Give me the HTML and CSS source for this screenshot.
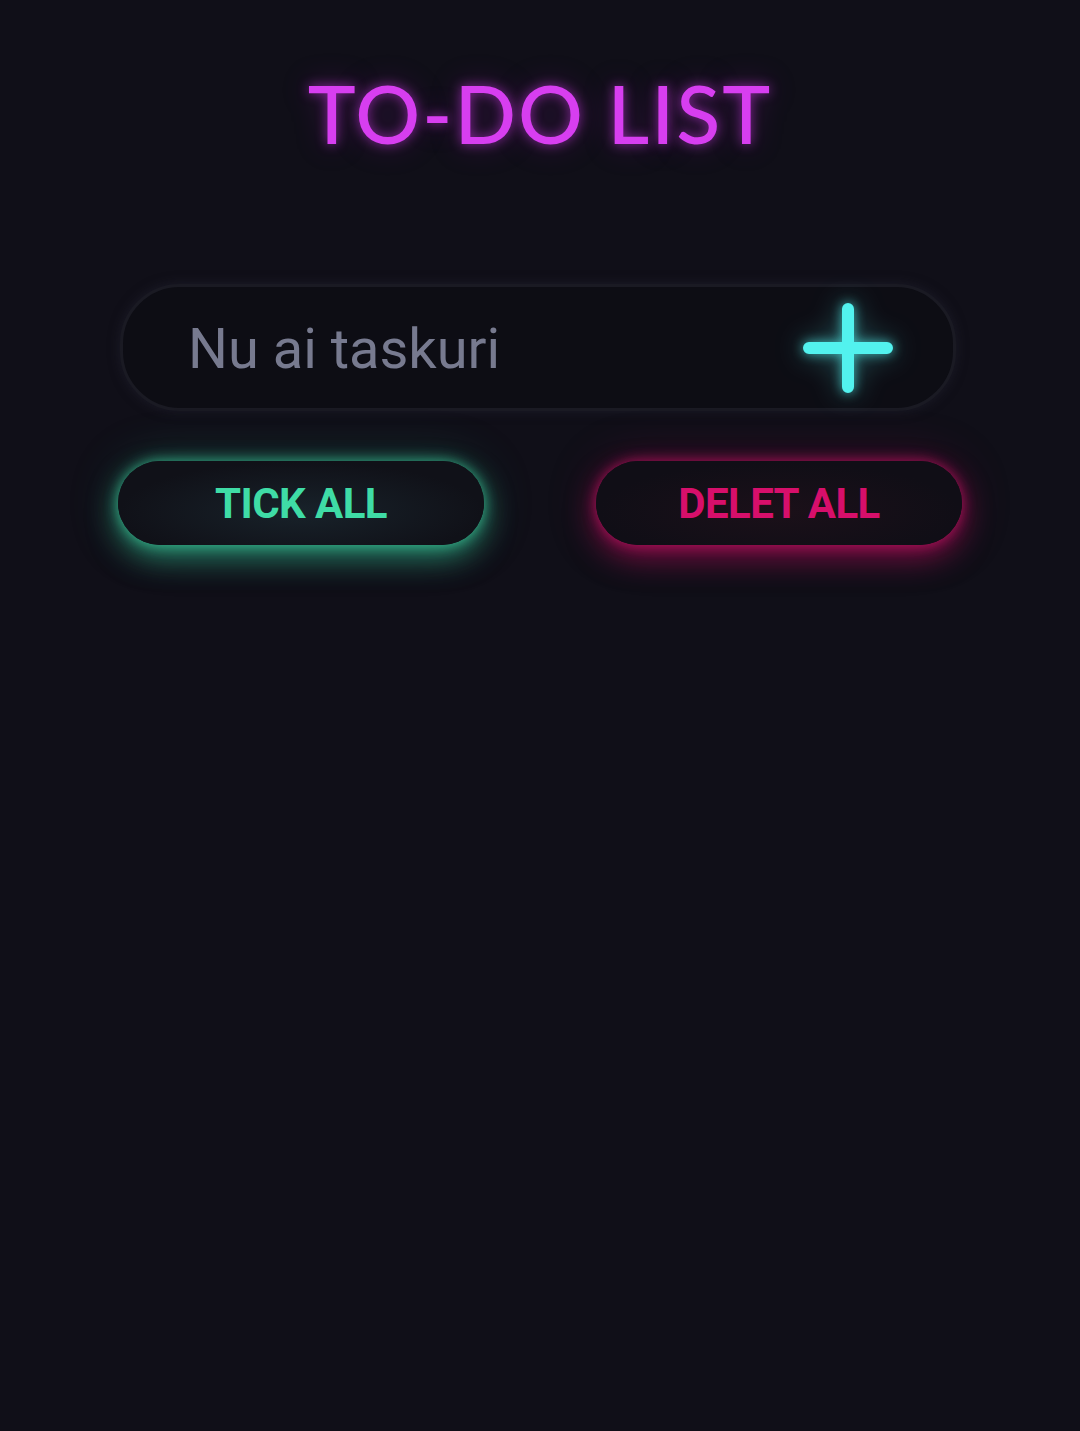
FILE: index.html
```html
<!DOCTYPE html>
<html lang="ro">
<head>
<meta charset="utf-8">
<title>To-Do List</title>
<link rel="stylesheet" href="styles.css">
</head>
<body>
<main class="app">
  <h1 class="title">TO-DO LIST</h1>
  <div class="input-bar">
    <span class="placeholder">Nu ai taskuri</span>
    <button class="add-btn" aria-label="Adaugă">
      <svg viewBox="0 0 96 96" width="96" height="96">
        <path d="M48 9 V87 M9 48 H87" stroke="#52f2ee" stroke-width="12" stroke-linecap="round" fill="none"/>
      </svg>
    </button>
  </div>
  <div class="actions">
    <button class="pill tick">TICK ALL</button>
    <button class="pill delete">DELET ALL</button>
  </div>
</main>
</body>
</html>
```

FILE: styles.css
```css
html, body {
  margin: 0;
  padding: 0;
  background: #100f18;
  height: 100%;
}
body {
  font-family: Roboto, "Liberation Sans", sans-serif;
}
.app {
  width: 844px;
  margin: 0 auto;
  padding-top: 58px;
  display: flex;
  flex-direction: column;
  align-items: center;
}
.title {
  margin: 0;
  font-family: Lato, "Open Sans", sans-serif;
  font-weight: 500;
  font-size: 81px;
  line-height: 110px;
  letter-spacing: 2px;
  color: #d73ef0;
  text-shadow: 0 0 12px rgba(215, 62, 240, 0.6), 0 0 30px rgba(160, 30, 190, 0.35);
}
.input-bar {
  margin-top: 116px;
  width: 836px;
  height: 127px;
  box-sizing: border-box;
  margin-left: -4px;
  border-radius: 60px;
  background: #0d0d14;
  border: 3px solid #1a1a23;
  box-shadow: 0 0 12px rgba(40, 40, 55, 0.5);
  display: flex;
  align-items: center;
  justify-content: space-between;
  padding: 0 57px 0 65px;
}
.placeholder {
  font-size: 56px;
  color: #777a8f;
  margin-top: 2px;
}
.add-btn {
  background: none;
  border: 0;
  padding: 0;
  width: 96px;
  height: 96px;
  display: flex;
  filter: drop-shadow(0 0 6px rgba(82, 242, 238, 0.7)) drop-shadow(0 0 14px rgba(82, 242, 238, 0.35));
}
.add-btn svg { display: block; }
.actions {
  margin-top: 50px;
  width: 844px;
  display: flex;
  justify-content: space-between;
}
.pill {
  width: 366px;
  height: 84px;
  border-radius: 42px;
  border: 0;
  font-family: Roboto, "Liberation Sans", sans-serif;
  font-weight: 700;
  font-size: 42px;
  letter-spacing: -0.6px;
}
.tick {
  color: #3fdca6;
  background: radial-gradient(ellipse at 50% 60%, #18222a 0%, #101118 70%);
  box-shadow: 0 0 14px rgba(63, 220, 166, 0.7), 0 12px 30px rgba(52, 190, 145, 0.6), 0 0 50px rgba(40, 150, 120, 0.3);
}
.delete {
  color: #d70f6b;
  background: radial-gradient(ellipse at 50% 60%, #1b1019 0%, #100e16 70%);
  box-shadow: 0 0 14px rgba(215, 15, 107, 0.7), 0 12px 30px rgba(190, 15, 95, 0.55), 0 0 50px rgba(150, 10, 80, 0.3);
}
```
